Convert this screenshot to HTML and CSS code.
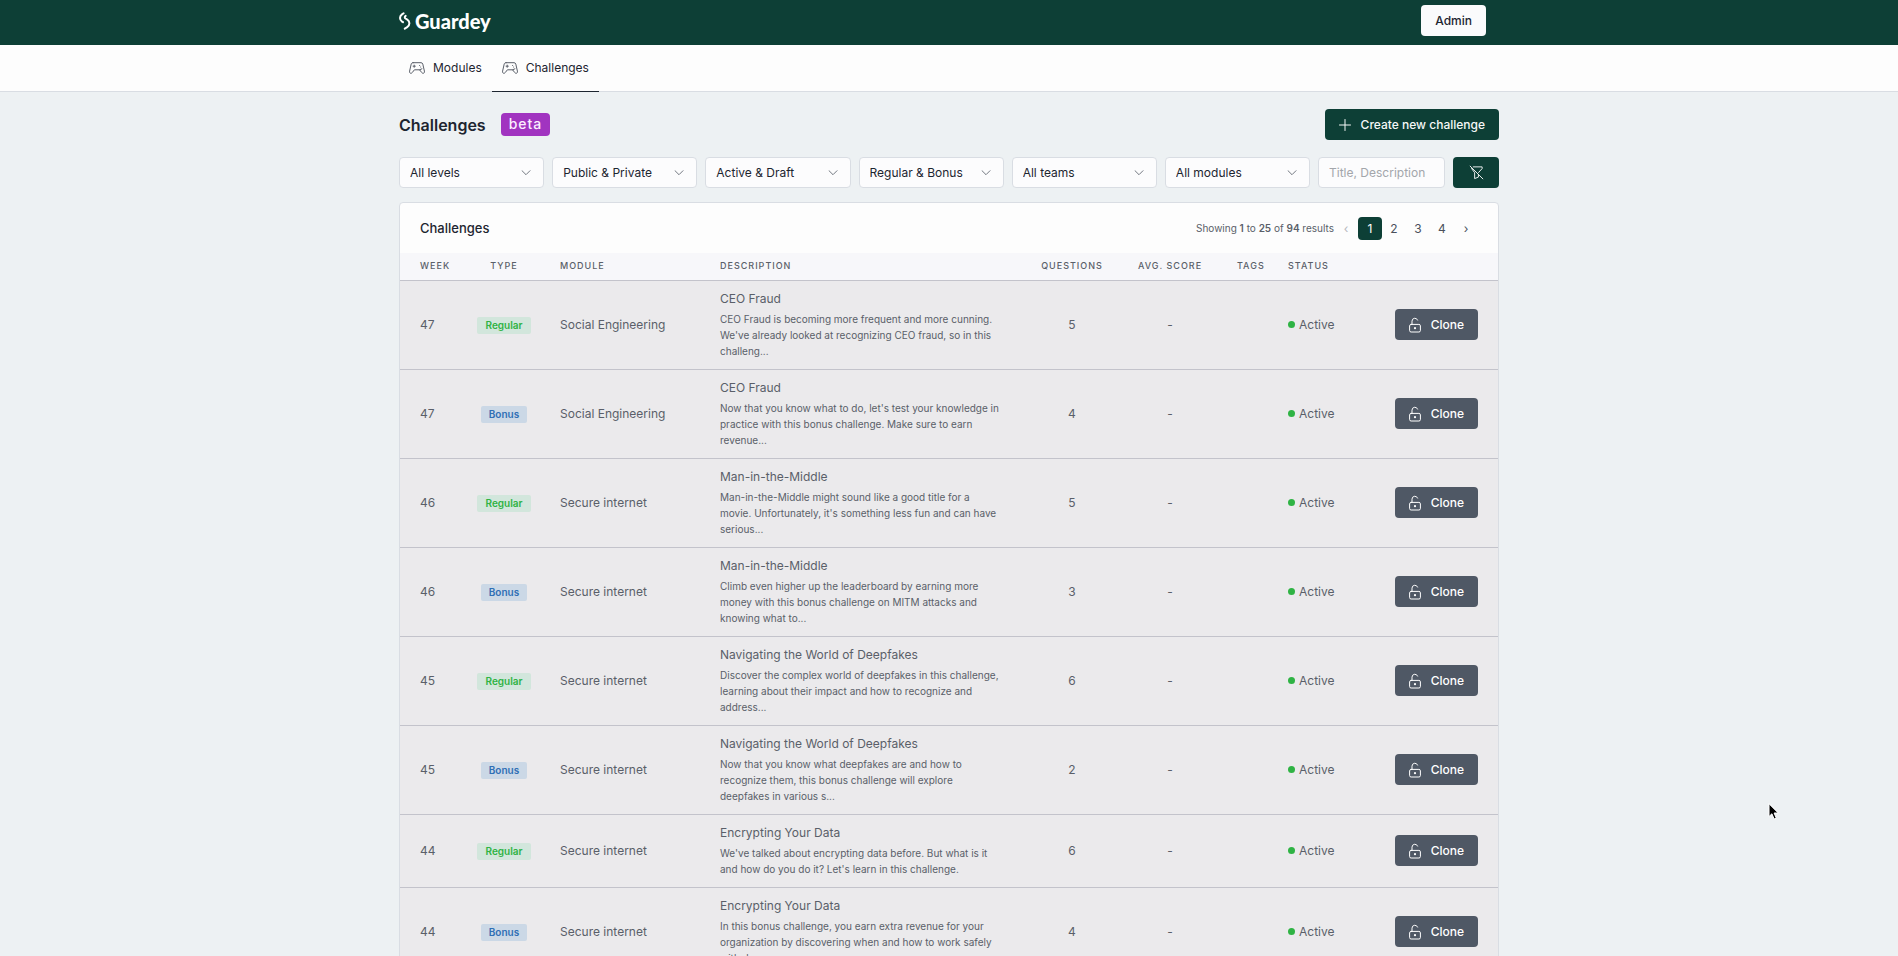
FILE: index.html
```html
<!DOCTYPE html>
<html lang="en">

<head>
  <meta charset="utf-8">
  <title>Challenges | Guardey</title>
  <meta content="width=device-width, initial-scale=1" name="viewport">
  <link rel="stylesheet" href="styles.css">
</head>

<body>
  <!-- Shared icons -->
  <svg class="sprite" aria-hidden="true">
    <symbol id="icon-gamepad" viewBox="0 0 16 12">
      <path d="M4 .7h8c.9 0 1.600.5 1.800 1.400l1.600 7c.3 1.300-.3 2.200-1.300 2.200-.6 0-1-.3-1.400-.8L10.600 7.800H5.400L3.300 10.500c-.4.5-.8.8-1.400.8-1 0-1.600-.9-1.300-2.200l1.600-7C2.400 1.200 3.100.7 4 .7z"></path>
      <path d="M5.200 3.100v2.200M4.100 4.200h2.200M10.600 3.500v.1M11.600 5v.1M10.600 7.800l2.300-1"></path>
    </symbol>
    <symbol id="icon-lock" viewBox="0 0 12 16">
      <rect x="0.600" y="7.400" width="10.800" height="7.600" rx="1.500"></rect>
      <path d="M3 7.400V4.200a2.900 2.900 0 0 1 5.600-1.100"></path>
      <circle class="dot" cx="6" cy="11.200" r="1.100"></circle>
    </symbol>
  </svg>

  <header class="topbar">
    <div class="container topbar-inner">
      <a class="brand" href="#">
        <svg class="brand-mark" viewBox="0 0 12 18" aria-hidden="true">
          <path d="M4.600 1.300 3 2.400C.3 4.300.4 8 3 9.600l1 .6"></path>
          <path d="M5.800 16.700l2.400-1.500c2.900-1.900 2.900-5.900.1-7.600L6.500 6.500c-1-.7-1-1.900.1-2.600"></path>
        </svg>
        <span>Guardey</span>
      </a>
      <button class="btn btn-light" type="button">Admin</button>
    </div>
  </header>

  <nav class="navbar">
    <div class="container nav-list">
      <a class="nav-link" href="#"><svg class="nav-icon"><use href="#icon-gamepad"></use></svg>Modules</a>
      <a class="nav-link active" href="#"><svg class="nav-icon"><use href="#icon-gamepad"></use></svg>Challenges</a>
    </div>
  </nav>

  <main class="container">
    <div class="page-header">
      <h1 class="page-title">Challenges</h1>
      <span class="beta">beta</span>
      <button class="btn btn-primary" type="button">
        <svg class="plus-icon" viewBox="0 0 12 12" aria-hidden="true"><path d="M6 .5v11M.5 6h11"></path></svg>
        Create new challenge
      </button>
    </div>

    <form class="filters">
      <select class="field" aria-label="Level"><option>All levels</option></select>
      <select class="field" aria-label="Visibility"><option>Public &amp; Private</option></select>
      <select class="field" aria-label="State"><option>Active &amp; Draft</option></select>
      <select class="field" aria-label="Type"><option>Regular &amp; Bonus</option></select>
      <select class="field" aria-label="Team"><option>All teams</option></select>
      <select class="field" aria-label="Module"><option>All modules</option></select>
      <input class="field search" type="text" aria-label="Search" placeholder="Title, Description">
      <button class="btn btn-primary btn-reset" type="reset" aria-label="Clear filters">
        <svg class="filter-icon" viewBox="0 0 16 16" aria-hidden="true">
          <path d="M4.500 2H14v1.800L10.200 8M2.800 3.800 6 8.200V14.500l4-1.600V10M1.200 1.200l13.600 13.600"></path>
        </svg>
      </button>
    </form>

    <section class="card">
      <div class="card-header">
        <h2 class="card-title">Challenges</h2>
        <p class="results">Showing <b>1</b> to <b>25</b> of <b>94</b> results</p>
        <div class="pagination">
          <a class="page disabled">‹</a>
          <a class="page current" href="#">1</a>
          <a class="page" href="#">2</a>
          <a class="page" href="#">3</a>
          <a class="page" href="#">4</a>
          <a class="page" href="#">›</a>
        </div>
      </div>

      <table class="table">
        <colgroup>
          <col class="col-week">
          <col class="col-type">
          <col class="col-module">
          <col>
          <col class="col-questions">
          <col class="col-score">
          <col class="col-tags">
          <col class="col-status">
          <col class="col-action">
        </colgroup>
        <thead>
          <tr>
            <th>Week</th>
            <th class="center">Type</th>
            <th>Module</th>
            <th>Description</th>
            <th class="center">Questions</th>
            <th class="center">Avg. score</th>
            <th>Tags</th>
            <th>Status</th>
            <th></th>
          </tr>
        </thead>
        <tbody>
          <tr>
            <td>47</td>
            <td class="center"><span class="badge regular">Regular</span></td>
            <td>Social Engineering</td>
            <td class="about">
              <div class="about-title">CEO Fraud</div>
              <p>CEO Fraud is becoming more frequent and more cunning. We've already looked at recognizing CEO fraud, so in this challeng...</p>
            </td>
            <td class="center">5</td>
            <td class="center">-</td>
            <td></td>
            <td><span class="status">Active</span></td>
            <td class="action"><button class="btn btn-clone" type="button"><svg class="lock-icon"><use href="#icon-lock"></use></svg>Clone</button></td>
          </tr>
          <tr>
            <td>47</td>
            <td class="center"><span class="badge bonus">Bonus</span></td>
            <td>Social Engineering</td>
            <td class="about">
              <div class="about-title">CEO Fraud</div>
              <p>Now that you know what to do, let's test your knowledge in practice with this bonus challenge. Make sure to earn revenue...</p>
            </td>
            <td class="center">4</td>
            <td class="center">-</td>
            <td></td>
            <td><span class="status">Active</span></td>
            <td class="action"><button class="btn btn-clone" type="button"><svg class="lock-icon"><use href="#icon-lock"></use></svg>Clone</button></td>
          </tr>
          <tr>
            <td>46</td>
            <td class="center"><span class="badge regular">Regular</span></td>
            <td>Secure internet</td>
            <td class="about">
              <div class="about-title">Man-in-the-Middle</div>
              <p>Man-in-the-Middle might sound like a good title for a movie. Unfortunately, it's something less fun and can have serious...</p>
            </td>
            <td class="center">5</td>
            <td class="center">-</td>
            <td></td>
            <td><span class="status">Active</span></td>
            <td class="action"><button class="btn btn-clone" type="button"><svg class="lock-icon"><use href="#icon-lock"></use></svg>Clone</button></td>
          </tr>
          <tr>
            <td>46</td>
            <td class="center"><span class="badge bonus">Bonus</span></td>
            <td>Secure internet</td>
            <td class="about">
              <div class="about-title">Man-in-the-Middle</div>
              <p>Climb even higher up the leaderboard by earning more money with this bonus challenge on MITM attacks and knowing what to...</p>
            </td>
            <td class="center">3</td>
            <td class="center">-</td>
            <td></td>
            <td><span class="status">Active</span></td>
            <td class="action"><button class="btn btn-clone" type="button"><svg class="lock-icon"><use href="#icon-lock"></use></svg>Clone</button></td>
          </tr>
          <tr>
            <td>45</td>
            <td class="center"><span class="badge regular">Regular</span></td>
            <td>Secure internet</td>
            <td class="about">
              <div class="about-title">Navigating the World of Deepfakes</div>
              <p>Discover the complex world of deepfakes in this challenge, learning about their impact and how to recognize and address...</p>
            </td>
            <td class="center">6</td>
            <td class="center">-</td>
            <td></td>
            <td><span class="status">Active</span></td>
            <td class="action"><button class="btn btn-clone" type="button"><svg class="lock-icon"><use href="#icon-lock"></use></svg>Clone</button></td>
          </tr>
          <tr>
            <td>45</td>
            <td class="center"><span class="badge bonus">Bonus</span></td>
            <td>Secure internet</td>
            <td class="about">
              <div class="about-title">Navigating the World of Deepfakes</div>
              <p>Now that you know what deepfakes are and how to recognize them, this bonus challenge will explore deepfakes in various s...</p>
            </td>
            <td class="center">2</td>
            <td class="center">-</td>
            <td></td>
            <td><span class="status">Active</span></td>
            <td class="action"><button class="btn btn-clone" type="button"><svg class="lock-icon"><use href="#icon-lock"></use></svg>Clone</button></td>
          </tr>
          <tr>
            <td>44</td>
            <td class="center"><span class="badge regular">Regular</span></td>
            <td>Secure internet</td>
            <td class="about">
              <div class="about-title">Encrypting Your Data</div>
              <p>We've talked about encrypting data before. But what is it and how do you do it? Let's learn in this challenge.</p>
            </td>
            <td class="center">6</td>
            <td class="center">-</td>
            <td></td>
            <td><span class="status">Active</span></td>
            <td class="action"><button class="btn btn-clone" type="button"><svg class="lock-icon"><use href="#icon-lock"></use></svg>Clone</button></td>
          </tr>
          <tr>
            <td>44</td>
            <td class="center"><span class="badge bonus">Bonus</span></td>
            <td>Secure internet</td>
            <td class="about">
              <div class="about-title">Encrypting Your Data</div>
              <p>In this bonus challenge, you earn extra revenue for your organization by discovering when and how to work safely with da...</p>
            </td>
            <td class="center">4</td>
            <td class="center">-</td>
            <td></td>
            <td><span class="status">Active</span></td>
            <td class="action"><button class="btn btn-clone" type="button"><svg class="lock-icon"><use href="#icon-lock"></use></svg>Clone</button></td>
          </tr>
        </tbody>
      </table>
    </section>
  </main>

  <svg class="cursor" viewBox="0 0 12 18" aria-hidden="true">
    <path d="M1 1v12.500l2.900-2.700 2.200 5.200 2.200-.9-2.200-5.100H10z"></path>
  </svg>
</body>

</html>
```

FILE: styles.css
```css
:root {
  --green: #0d3f36;
  --bg-body: #edf1f3;
  --bg-row: #ebeaec;
  --border-color: #d9dde3;
  --row-border: #c3c3cb;
  --text-color: #1d2530;
  --muted: #5a5f69;
}

* {
  box-sizing: border-box;
}

html {
  overflow: hidden;
}

body {
  font-family: Inter, "Liberation Sans", sans-serif;
  font-size: 12px;
  line-height: 20px;
  background-color: var(--bg-body);
  color: var(--text-color);
  margin: 0;
  height: 100vh;
  overflow: hidden;
}

h1,
h2,
p {
  margin: 0;
}

a {
  color: inherit;
  text-decoration: none;
}

svg {
  fill: none;
  stroke: currentColor;
  stroke-linecap: round;
  stroke-linejoin: round;
}

.sprite {
  display: none;
}

.container {
  max-width: 1100px;
  margin: 0 auto;
}

/* Top bar */
.topbar {
  background-color: var(--green);
  color: #fff;
}

.topbar-inner {
  display: flex;
  align-items: center;
  justify-content: space-between;
  height: 45px;
  padding: 0 13px 4px 0;
}

.brand {
  display: flex;
  align-items: center;
  gap: 4px;
  font-family: Lato, sans-serif;
  font-size: 20px;
  font-weight: 900;
}

.brand-mark {
  width: 12px;
  height: 18px;
  stroke-width: 2;
}

/* Buttons */
.btn {
  display: inline-flex;
  align-items: center;
  justify-content: center;
  height: 31px;
  padding: 0 14px;
  border: 0;
  border-radius: 4px;
  font: inherit;
  font-weight: 500;
  white-space: nowrap;
  cursor: pointer;
}

.btn-light {
  background-color: #fafbfc;
  color: var(--text-color);
}

.btn-primary {
  background-color: var(--green);
  color: #f5f8f7;
}

.btn-clone {
  gap: 10px;
  background-color: #4f5865;
  color: #fff;
}

.plus-icon {
  width: 12px;
  height: 12px;
  margin-right: 10px;
}

.lock-icon {
  width: 12px;
  height: 16px;
}

.dot {
  fill: currentColor;
  stroke: none;
}

.filter-icon {
  width: 15px;
  height: 15px;
}

/* Navigation */
.navbar {
  background-color: #fdfdfd;
  border-bottom: 1px solid var(--border-color);
}

.nav-list {
  display: flex;
}

.nav-link {
  display: flex;
  align-items: center;
  gap: 8px;
  height: 47px;
  margin-bottom: -1px;
  padding: 0 10px;
  border-bottom: 1px solid transparent;
}

.nav-link.active {
  border-bottom-color: var(--text-color);
}

.nav-icon {
  width: 16px;
  height: 12px;
  color: var(--muted);
}

/* Page header */
.page-header {
  display: flex;
  align-items: center;
  gap: 15px;
  padding-top: 17px;
}

.page-title {
  font-size: 16px;
  font-weight: 600;
}

.page-header .btn {
  margin-left: auto;
}

.beta {
  padding: 1px 8px 2px;
  border-radius: 4px;
  background-color: #a134c0;
  color: #fbeeff;
  font-size: 14px;
  font-weight: 500;
  letter-spacing: 1px;
}

/* Filters */
.filters {
  display: flex;
  gap: 8px;
  padding: 17px 0 14px;
}

.field {
  flex: 1 1 0;
  min-width: 0;
  height: 31px;
  padding: 0 10px;
  border: 1px solid var(--border-color);
  border-radius: 4px;
  background-color: #fcfcfd;
  color: var(--text-color);
  font: inherit;
}

select.field {
  appearance: none;
  background-image: url("data:image/svg+xml,%3Csvg xmlns='http://www.w3.org/2000/svg' viewBox='0 0 10 6' fill='none' stroke='%23737880' stroke-linecap='round'%3E%3Cpath d='M1 .7l4 4 4-4'/%3E%3C/svg%3E");
  background-repeat: no-repeat;
  background-position: right 12px center;
  background-size: 10px 6px;
}

.search {
  flex: 0 0 127px;
}

.search::placeholder {
  color: #a3a6ab;
}

.btn-reset {
  width: 46px;
}

/* Card */
.card {
  border: 1px solid var(--border-color);
  border-radius: 4px 4px 0 0;
  background-color: #fdfdfd;
}

.card-header {
  display: flex;
  align-items: center;
  height: 50px;
  padding: 0 20px;
}

.card-title {
  margin-right: auto;
  font-size: 13px;
  font-weight: 500;
}

.results {
  color: var(--muted);
  font-size: 10px;
}

.results b {
  font-weight: 600;
}

.pagination {
  display: flex;
}

.page {
  width: 24px;
  height: 23px;
  border-radius: 4px;
  color: #4a505b;
  line-height: 23px;
  text-align: center;
}

.page.current {
  background-color: var(--green);
  color: #fff;
}

.page.disabled {
  color: #b5b8bd;
}

/* Table */
.table {
  width: 100%;
  border-collapse: collapse;
  table-layout: fixed;
}

.col-week {
  width: 56px;
}

.col-type {
  width: 96px;
}

.col-module {
  width: 160px;
}

.col-questions {
  width: 78px;
}

.col-score {
  width: 118px;
}

.col-tags {
  width: 51px;
}

.col-status {
  width: 100px;
}

.col-action {
  width: 118px;
}

.table th,
.table td {
  padding: 0 8px;
  border-bottom: 1px solid var(--row-border);
  text-align: left;
  white-space: nowrap;
}

.table th {
  height: 27px;
  background-color: #f7f7fa;
  color: var(--muted);
  font-size: 9px;
  font-weight: 500;
  letter-spacing: 1px;
  text-transform: uppercase;
}

.table td {
  background-color: var(--bg-row);
  color: var(--muted);
}

.table th:first-child,
.table td:first-child {
  padding-left: 20px;
  padding-right: 0;
}

.table .center {
  text-align: center;
}

.table .action {
  padding-right: 20px;
  text-align: right;
}

.table .about {
  padding-top: 8px;
  padding-bottom: 10px;
  white-space: normal;
}

.about-title {
  margin-bottom: 2px;
}

.about p {
  max-width: 281px;
  font-size: 10px;
  line-height: 16px;
}

.badge {
  display: inline-block;
  padding: 0 8px;
  border-radius: 2px;
  font-size: 10px;
  font-weight: 600;
  line-height: 17px;
}

.regular {
  background-color: #d2e6dc;
  color: #2fb344;
}

.bonus {
  background-color: #cbd8e6;
  color: #2f6fb5;
}

.status {
  display: flex;
  align-items: center;
  gap: 4px;
}

.status::before {
  content: "";
  width: 7px;
  height: 7px;
  border-radius: 50%;
  background-color: #2fb344;
}

.cursor {
  position: absolute;
  top: 803px;
  left: 1768px;
  width: 12px;
  height: 18px;
  fill: #000;
  stroke: #fff;
  stroke-width: 1;
}
```
